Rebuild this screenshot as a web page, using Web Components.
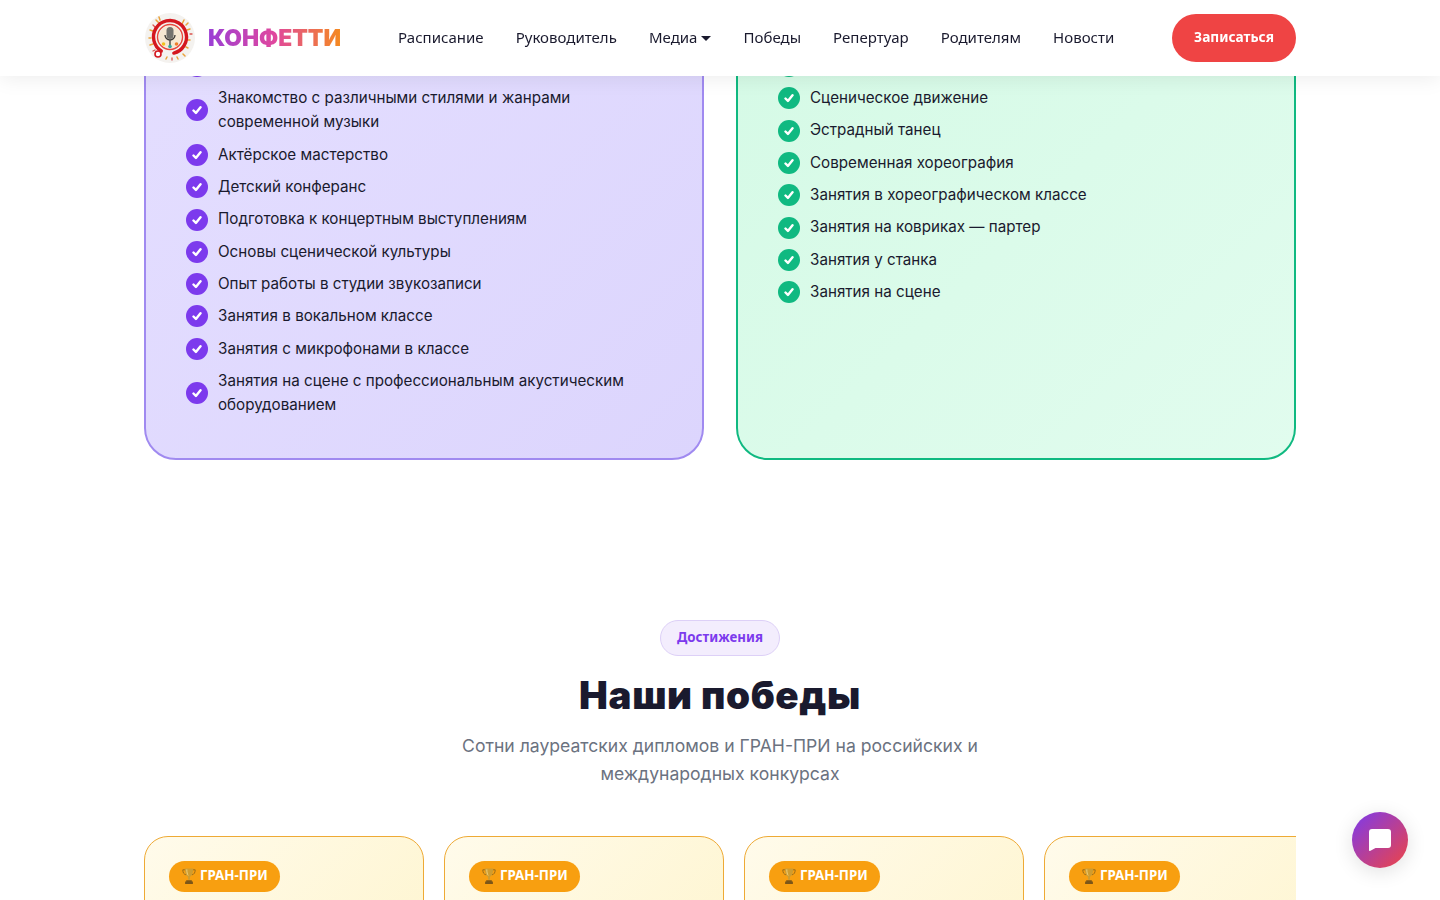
<!DOCTYPE html>
<html lang="ru">
<head>
<meta charset="utf-8">
<title>Конфетти</title>
<style>
  html, body { margin: 0; height: 900px; overflow: hidden; background: #fff; }
  body { font-family: Inter, "Liberation Sans", sans-serif; color: #1a1a2e; }
  main { display: block; width: 1152px; margin: 0 auto; padding-top: 11.8px; }
</style>
</head>
<body>
<site-header></site-header>
<main>
  <feature-grid>
    <feature-card tone="purple">
      <check-item></check-item>
      <check-item>Знакомство с различными стилями и жанрами современной музыки</check-item>
      <check-item>Актёрское мастерство</check-item>
      <check-item>Детский конферанс</check-item>
      <check-item>Подготовка к концертным выступлениям</check-item>
      <check-item>Основы сценической культуры</check-item>
      <check-item>Опыт работы в студии звукозаписи</check-item>
      <check-item>Занятия в вокальном классе</check-item>
      <check-item>Занятия с микрофонами в классе</check-item>
      <check-item>Занятия на сцене с профессиональным акустическим оборудованием</check-item>
    </feature-card>
    <feature-card tone="green">
      <check-item></check-item>
      <check-item>Сценическое движение</check-item>
      <check-item>Эстрадный танец</check-item>
      <check-item>Современная хореография</check-item>
      <check-item>Занятия в хореографическом классе</check-item>
      <check-item>Занятия на ковриках — партер</check-item>
      <check-item>Занятия у станка</check-item>
      <check-item>Занятия на сцене</check-item>
    </feature-card>
  </feature-grid>
  <wins-section>
    <win-card></win-card>
    <win-card></win-card>
    <win-card></win-card>
    <win-card></win-card>
  </wins-section>
</main>
<chat-button></chat-button>

<script>
const NAV_FONT = '"Noto Sans", "Open Sans", sans-serif';

class SiteHeader extends HTMLElement {
  connectedCallback() {
    this.attachShadow({mode: 'open'});
    this.shadowRoot.innerHTML = `
    <style>
      :host {
        position: fixed;
        top: 0;
        left: 0;
        right: 0;
        z-index: 10;
        display: block;
        height: 76px;
        background: #fff;
        box-shadow: 0 2px 20px rgba(0, 0, 0, 0.08);
      }
      .bar {
        display: flex;
        align-items: center;
        width: 1152px;
        height: 100%;
        margin: 0 auto;
      }
      .brand { display: flex; align-items: center; gap: 12px; }
      .brand svg { display: block; width: 52px; height: 52px; }
      .brand span {
        font: 900 22.8px/1 Inter, sans-serif;
        background: linear-gradient(90deg, #9b3fd6 0%, #e0479e 50%, #f58a1f 100%);
        -webkit-background-clip: text;
        background-clip: text;
        color: transparent;
      }
      nav {
        display: flex;
        align-items: center;
        gap: 32px;
        margin-left: 57px;
        padding-bottom: 2px;
        font: 400 15px/24px ${NAV_FONT};
        letter-spacing: 0.02px;
        color: #1a1a2e;
      }
      .caret {
        display: inline-block;
        margin-left: 4px;
        vertical-align: 2px;
        border: 5px solid transparent;
        border-top-color: #1a1a2e;
        border-bottom-width: 0;
      }
      .cta {
        box-sizing: border-box;
        margin-left: auto;
        display: flex;
        align-items: center;
        justify-content: center;
        width: 124px;
        height: 48px;
        padding-bottom: 2px;
        border-radius: 24px;
        background: #ef4444;
        color: #fff;
        font: 700 13.7px/1 ${NAV_FONT};
      }
    </style>
    <div class="bar">
      <div class="brand">
        <svg viewBox="0 0 52 52">
          <circle cx="26" cy="26" r="25" fill="#f4f2ef"/>
          <g fill="none" stroke-linecap="round">
            <path d="M12 8l3 3M15 5l1 3M40 8l-2 4M44 11l-2 2M46 17l-3 1M6 18l3 1M5 26l2 0M6 33l3-1M46 28l-2 0M44 36l-2-1M41 44l-2-2M34 47l-1-2M22 47l1-2" stroke="#e9a23b" stroke-width="1.5"/>
            <path d="M9 13l2 2M48 22l-2 0M9 39l2-1M28 48l0-2" stroke="#d9534f" stroke-width="1.3"/>
            <circle cx="26" cy="25" r="16.500" stroke="#d4171f" stroke-width="3.400" stroke-dasharray="90 14" transform="rotate(122 26 25)"/>
            <circle cx="26" cy="25" r="12.500" stroke="#e8473c" stroke-width="1.400"/>
          </g>
          <circle cx="26" cy="25" r="11" fill="#f6e8d2"/>
          <rect x="22.500" y="15" width="7" height="12" rx="3.500" fill="#74736e"/>
          <path d="M21 23a5 5 0 0 0 10 0M26 28v5" fill="none" stroke="#3a3936" stroke-width="1.300"/>
          <circle cx="19.500" cy="32" r="1.800" fill="#f2c21b"/>
          <circle cx="26" cy="34.500" r="1.800" fill="#2fa9a0"/>
          <circle cx="32.500" cy="32" r="1.800" fill="#ef7f2a"/>
          <circle cx="14" cy="42" r="3" fill="#fff" stroke="#d4171f" stroke-width="1.600"/>
        </svg>
        <span>КОНФЕТТИ</span>
      </div>
      <nav>
        <span>Расписание</span>
        <span>Руководитель</span>
        <span>Медиа<i class="caret"></i></span>
        <span>Победы</span>
        <span>Репертуар</span>
        <span>Родителям</span>
        <span>Новости</span>
      </nav>
      <div class="cta">Записаться</div>
    </div>`;
  }
}

class FeatureGrid extends HTMLElement {
  connectedCallback() {
    this.attachShadow({mode: 'open'});
    this.shadowRoot.innerHTML = `
    <style>
      :host {
        display: grid;
        grid-template-columns: 1fr 1fr;
        gap: 32px;
      }
    </style>
    <slot></slot>`;
  }
}

class FeatureCard extends HTMLElement {
  connectedCallback() {
    this.attachShadow({mode: 'open'});
    this.shadowRoot.innerHTML = `
    <style>
      :host {
        display: flex;
        flex-direction: column;
        gap: 8px;
        padding: 40px 40px 40.6px;
        border: 2px solid #a08af0;
        border-radius: 32px;
        background: linear-gradient(135deg, #e4deff 0%, #dcd5fd 100%);
        --accent: #7c3aed;
      }
      :host([tone="green"]) {
        border-color: #10b981;
        background: linear-gradient(135deg, #d5fae6 0%, #e1fcee 100%);
        --accent: #10b981;
      }
    </style>
    <slot></slot>`;
  }
}

class CheckItem extends HTMLElement {
  connectedCallback() {
    this.attachShadow({mode: 'open'});
    this.shadowRoot.innerHTML = `
    <style>
      :host {
        display: flex;
        align-items: center;
        gap: 10px;
        min-height: 24.32px;
        font: 400 15.2px/24.32px Inter, sans-serif;
        color: #1a1a2e;
      }
      .dot {
        flex: none;
        display: flex;
        align-items: center;
        justify-content: center;
        width: 22px;
        height: 22px;
        border-radius: 50%;
        background: var(--accent);
      }
      svg { display: block; width: 10px; height: 10px; }
    </style>
    <span class="dot">
      <svg viewBox="0 0 12 12"><path d="M1.800 6.600l2.900 2.900 5.500-6.800" fill="none" stroke="#fff" stroke-width="2.900" stroke-linecap="round" stroke-linejoin="round"/></svg>
    </span>
    <span><slot></slot></span>`;
  }
}

class WinsSection extends HTMLElement {
  connectedCallback() {
    this.attachShadow({mode: 'open'});
    this.shadowRoot.innerHTML = `
    <style>
      :host {
        display: flex;
        flex-direction: column;
        align-items: center;
        padding-top: 160px;
      }
      .tag {
        box-sizing: border-box;
        width: 120px;
        height: 36px;
        display: flex;
        align-items: center;
        justify-content: center;
        padding-bottom: 1px;
        border: 1px solid #ddd0f7;
        border-radius: 18px;
        background: #f3edfd;
        color: #7c3aed;
        font: 700 13.3px/1 ${NAV_FONT};
      }
      h2 {
        margin: 15px 0 0;
        font: 900 38.5px/48px Inter, sans-serif;
        letter-spacing: 0.6px;
        color: #1a1a2e;
      }
      p {
        width: 600px;
        margin: 12.5px 0 0;
        text-align: center;
        font: 400 17.6px/28.16px Inter, sans-serif;
        color: #6b7280;
      }
      .row {
        align-self: stretch;
        display: flex;
        gap: 20px;
        margin-top: 48px;
        overflow: hidden;
      }
    </style>
    <div class="tag">Достижения</div>
    <h2>Наши победы</h2>
    <p>Сотни лауреатских дипломов и ГРАН-ПРИ на российских и международных конкурсах</p>
    <div class="row"><slot></slot></div>`;
  }
}

class WinCard extends HTMLElement {
  connectedCallback() {
    this.attachShadow({mode: 'open'});
    this.shadowRoot.innerHTML = `
    <style>
      :host {
        flex: none;
        box-sizing: border-box;
        display: block;
        width: 280px;
        height: 260px;
        padding: 24px;
        border: 1px solid #eeaa35;
        border-radius: 24px;
        background: linear-gradient(135deg, #fffbeb 0%, #fef3c7 100%);
      }
      .badge {
        display: inline-flex;
        align-items: center;
        gap: 4px;
        height: 31px;
        padding: 0 12px 0 13px;
        border-radius: 16px;
        background: #f89f10;
        color: #fff;
        font: 700 13.300px/1 ${NAV_FONT};
      }
      .badge span { padding-bottom: 2px; }
      svg { display: block; width: 14px; height: 16px; margin-bottom: 1px; }
    </style>
    <div class="badge">
      <svg viewBox="0 0 14 16">
        <path d="M3 1.800H.8c0 3 1.200 4.600 3.200 5M11 1.800h2.200c0 3-1.200 4.600-3.200 5" fill="none" stroke="#9a6c18" stroke-width="1"/>
        <path d="M2.800 .6h8.400c0 4.400-1.100 7.400-3.200 8.100v3.100H6V8.700C3.900 8 2.800 5 2.800 .6z" fill="#cf9c30"/>
        <path d="M4.800 1.400c0 2.800.4 4.800 1.400 6" fill="none" stroke="#f2d988" stroke-width=".9"/>
        <path d="M4.200 12.200h5.600v1.400h1.100V16H3.100v-2.400h1.100z" fill="#7c5618"/>
      </svg>
      <span>ГРАН-ПРИ</span>
    </div>`;
  }
}

class ChatButton extends HTMLElement {
  connectedCallback() {
    this.attachShadow({mode: 'open'});
    this.shadowRoot.innerHTML = `
    <style>
      :host {
        position: fixed;
        right: 32px;
        bottom: 32px;
        z-index: 20;
        display: flex;
        align-items: center;
        justify-content: center;
        width: 56px;
        height: 56px;
        border-radius: 50%;
        background: linear-gradient(135deg, #7c3aed 0%, #ef4444 100%);
        box-shadow: 0 4px 20px rgba(0, 0, 0, 0.12);
      }
      svg { display: block; width: 22px; height: 22px; }
    </style>
    <svg viewBox="0 0 22 22"><path d="M3 0h16a3 3 0 0 1 3 3v13a3 3 0 0 1-3 3H6.500l-5 2.800c-.7.400-1.500 0-1.500-.8V3a3 3 0 0 1 3-3z" fill="#fff"/></svg>`;
  }
}

customElements.define('site-header', SiteHeader);
customElements.define('feature-grid', FeatureGrid);
customElements.define('feature-card', FeatureCard);
customElements.define('check-item', CheckItem);
customElements.define('wins-section', WinsSection);
customElements.define('win-card', WinCard);
customElements.define('chat-button', ChatButton);
</script>
</body>
</html>
